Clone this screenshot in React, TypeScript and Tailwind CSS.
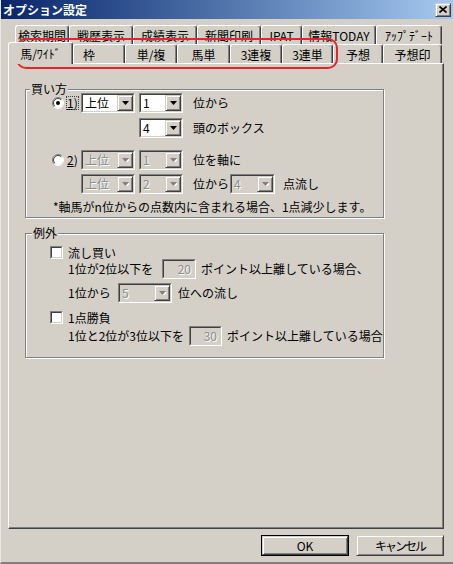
import React from "react";

const dim = "text-[#8c8c8c] [text-shadow:1px_1px_0_#ffffff]";
const raised =
  "bg-[#d4d0c8] border border-t-[#d4d0c8] border-l-[#d4d0c8] border-b-[#404040] border-r-[#404040] shadow-[inset_1px_1px_0_#ffffff,inset_-1px_-1px_0_#808080]";

function Arrow({ dis }: { dis?: boolean }) {
  return (
    <svg width="7" height="4" viewBox="0 0 7 4">
      {dis && <path d="M1 1h7L4.5 5z" fill="#ffffff" />}
      <path d="M0 0h7L3.5 4z" fill={dis ? "#808080" : "#000000"} />
    </svg>
  );
}

function Sunken({ cls, dis, children }: { cls: string; dis?: boolean; children: React.ReactNode }) {
  return (
    <div className={`${cls} h-[20px] flex border border-t-[#808080] border-l-[#808080] border-b-white border-r-white`}>
      <div
        className={`flex-1 flex border border-t-[#404040] border-l-[#404040] border-b-[#d4d0c8] border-r-[#d4d0c8] ${
          dis ? "bg-[#d4d0c8]" : "bg-white"
        }`}
      >
        {children}
      </div>
    </div>
  );
}

function Combo({ cls, v, dis }: { cls: string; v: string; dis?: boolean }) {
  return (
    <Sunken cls={cls} dis={dis}>
      <div className={`flex-1 flex items-center pl-[2px] ${dis ? dim : ""}`}>{v}</div>
      <div className={`w-[16px] flex items-center justify-center ${raised}`}>
        <Arrow dis={dis} />
      </div>
    </Sunken>
  );
}

function TextBox({ cls, v }: { cls: string; v: string }) {
  return (
    <Sunken cls={cls} dis>
      <div className={`flex-1 flex items-center justify-end pr-[3px] ${dim}`}>{v}</div>
    </Sunken>
  );
}

function Radio({ checked }: { checked?: boolean }) {
  return (
    <svg width="12" height="12" viewBox="0 0 12 12" className="shrink-0">
      <circle cx="6" cy="6" r="5" fill="#ffffff" />
      <path d="M2.1 9.9 A5.5 5.5 0 0 1 9.9 2.1" stroke="#808080" fill="none" />
      <path d="M9.9 2.1 A5.5 5.5 0 0 1 2.1 9.9" stroke="#ffffff" fill="none" />
      <path d="M2.8 9.2 A4.5 4.5 0 0 1 9.2 2.8" stroke="#404040" fill="none" />
      {checked && <circle cx="6" cy="6" r="2" fill="#000000" />}
    </svg>
  );
}

function Check() {
  return (
    <div className="w-[13px] h-[13px] shrink-0 flex border border-t-[#808080] border-l-[#808080] border-b-white border-r-white">
      <div className="flex-1 border border-t-[#404040] border-l-[#404040] border-b-[#d4d0c8] border-r-[#d4d0c8] bg-white" />
    </div>
  );
}

function Tab({ cls, label }: { cls: string; label: string }) {
  return (
    <div
      className={`${cls} h-[19px] flex items-center pt-[2px] border border-b-0 border-l-white border-t-white border-r-[#404040] shadow-[inset_-1px_0_0_#808080] rounded-t-[3px] whitespace-nowrap`}
    >
      {label}
    </div>
  );
}

function Group({ cls, label, labelCls, children }: { cls: string; label: string; labelCls: string; children: React.ReactNode }) {
  return (
    <div className={`relative w-[359px] ${cls} border border-[#808080] shadow-[inset_1px_1px_0_#ffffff,1px_1px_0_#ffffff]`}>
      <span className={`absolute top-[-8px] ${labelCls} px-[1px] bg-[#d4d0c8]`}>{label}</span>
      {children}
    </div>
  );
}

export default function App() {
  return (
    <div className="relative w-[453px] h-[564px] overflow-hidden bg-[#d4d0c8] text-[12px] leading-[14px] text-black font-['Noto_Sans_CJK_JP',sans-serif] border-b-2 border-b-[#808080] border-l border-l-[#e8e6e0]">
      {/* title bar */}
      <div className="h-[19px] flex items-center justify-between pl-[2px] pr-[2px] bg-gradient-to-r from-[#0a246a] to-[#a6caf0]">
        <span className="text-white font-bold">オプション設定</span>
        <div className={`w-[16px] h-[14px] flex items-center justify-center ${raised}`}>
          <svg width="8" height="7" viewBox="0 0 8 7">
            <path d="M0.5 0.5L7.5 6.5M7.5 0.5L0.5 6.5" stroke="#000000" strokeWidth="1.6" />
          </svg>
        </div>
      </div>

      {/* tabs */}
      <div className="mt-[6px]">
        <div className="flex pl-[14px]">
          <Tab cls="w-[54px] justify-center" label="検索期間" />
          <Tab cls="w-[64px] justify-center" label="戦歴表示" />
          <Tab cls="w-[64px] justify-center" label="成績表示" />
          <Tab cls="w-[64px] justify-center" label="新聞印刷" />
          <Tab cls="w-[41px] justify-center" label="IPAT" />
          <Tab cls="w-[74px] justify-center" label="情報TODAY" />
          <Tab cls="w-[66px] justify-center" label="ｱｯﾌﾟﾃﾞｰﾄ" />
        </div>
        <div className="flex items-end h-[19px] pl-[7px]">
          <div className="relative z-10 w-[65px] h-[22px] -mb-px flex items-center justify-center bg-[#d4d0c8] border-l border-t border-r border-l-white border-t-white border-r-[#404040] shadow-[inset_-1px_0_0_#808080] rounded-t-[3px]">
            馬/ﾜｲﾄﾞ
          </div>
          <Tab cls="w-[52px] justify-start pl-[9px]" label="枠" />
          <Tab cls="w-[52px] justify-center" label="単/複" />
          <Tab cls="w-[53px] justify-center" label="馬単" />
          <Tab cls="w-[52px] justify-center" label="3連複" />
          <Tab cls="w-[51px] justify-center" label="3連単" />
          <Tab cls="w-[50px] justify-center" label="予想" />
          <Tab cls="w-[59px] justify-center" label="予想印" />
        </div>
      </div>

      {/* panel */}
      <div className="ml-[7px] w-[436px] h-[466px] border border-l-white border-t-white border-r-[#404040] border-b-[#404040] shadow-[inset_-1px_-1px_0_#808080] pt-[25px] pl-[16px]">
        <Group cls="h-[129px]" label="買い方" labelCls="left-[4px]">
          <div className="flex flex-col pl-[26px] pt-[3px]">
            <div className="flex items-center h-[20px]">
              <Radio checked />
              <span className="ml-[3px] w-[11px] leading-[12px] outline outline-1 outline-dotted outline-[#404040]">
                <u>1</u>)
              </span>
              <div className="ml-[3px]">
                <Combo cls="w-[54px]" v="上位" />
              </div>
              <div className="ml-[4px]">
                <Combo cls="w-[44px]" v="1" />
              </div>
              <span className="ml-[10px]">位から</span>
            </div>
            <div className="flex items-center h-[20px] mt-[5px]">
              <div className="ml-[87px]">
                <Combo cls="w-[44px]" v="4" />
              </div>
              <span className="ml-[10px]">頭のボックス</span>
            </div>
            <div className="flex items-center h-[20px] mt-[12px]">
              <Radio />
              <span className="ml-[3px] w-[11px]">
                <u>2</u>)
              </span>
              <div className="ml-[3px]">
                <Combo cls="w-[54px]" v="上位" dis />
              </div>
              <div className="ml-[4px]">
                <Combo cls="w-[44px]" v="1" dis />
              </div>
              <span className="ml-[10px]">位を軸に</span>
            </div>
            <div className="flex items-center h-[20px] mt-[4px]">
              <div className="ml-[29px]">
                <Combo cls="w-[54px]" v="上位" dis />
              </div>
              <div className="ml-[4px]">
                <Combo cls="w-[44px]" v="2" dis />
              </div>
              <span className="ml-[10px] w-[37px]">位から</span>
              <Combo cls="w-[45px]" v="4" dis />
              <span className="ml-[8px]">点流し</span>
            </div>
            <div className="mt-[6px] ml-[1px] whitespace-nowrap">*軸馬がn位からの点数内に含まれる場合、1点減少します。</div>
          </div>
        </Group>

        <div className="mt-[15px]">
          <Group cls="h-[125px]" label="例外" labelCls="left-[6px]">
            <div className="flex flex-col pt-[12px]">
              <div className="flex items-center h-[13px] pl-[24px]">
                <Check />
                <span className="ml-[5px]">流し買い</span>
              </div>
              <div className="flex items-center h-[20px] pl-[42px]">
                <span className="w-[94px]">1位が2位以下を</span>
                <TextBox cls="w-[34px]" v="20" />
                <span className="ml-[5px]">ポイント以上離している場合、</span>
              </div>
              <div className="flex items-center h-[20px] mt-[4px] pl-[42px]">
                <span className="w-[50px]">1位から</span>
                <Combo cls="w-[54px]" v="5" dis />
                <span className="ml-[6px]">位への流し</span>
              </div>
              <div className="flex items-center h-[13px] mt-[8px] pl-[24px]">
                <Check />
                <span className="ml-[5px]">1点勝負</span>
              </div>
              <div className="flex items-center h-[20px] mt-[2px] pl-[42px]">
                <span className="w-[121px]">1位と2位が3位以下を</span>
                <TextBox cls="w-[33px]" v="30" />
                <span className="ml-[5px]">ポイント以上離している場合</span>
              </div>
            </div>
          </Group>
        </div>
      </div>

      {/* buttons */}
      <div className="mt-[6px] flex justify-end gap-[7px] pr-[9px]">
        <div className="w-[88px] h-[21px] flex border border-black">
          <div className={`flex-1 flex items-center justify-center ${raised}`}>OK</div>
        </div>
        <div className={`w-[88px] h-[21px] flex items-center justify-center tracking-[-2px] ${raised}`}>キャンセル</div>
      </div>

      {/* red annotation */}
      <div className="absolute left-[15px] top-[38px] w-[322px] h-[31px] border-2 border-[#e3262b] rounded-[10px] pointer-events-none" />
    </div>
  );
}
